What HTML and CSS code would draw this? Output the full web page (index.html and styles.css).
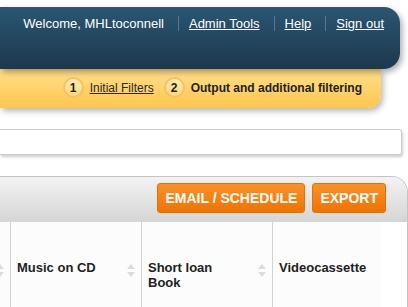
FILE: index.html
```html
<!DOCTYPE html>
<html lang="en">

<head>
    <meta charset="UTF-8">
    <meta name="viewport" content="width=device-width, initial-scale=1.0">
    <title>Report output</title>
    <link rel="stylesheet" href="styles.css">
</head>

<body>
    <header class="topbar">
        <ul class="usernav">
            <li>Welcome, MHLtoconnell</li>
            <li><a href="#">Admin Tools</a></li>
            <li><a href="#">Help</a></li>
            <li><a href="#">Sign out</a></li>
        </ul>
    </header>

    <nav class="steps">
        <span class="step-num">1</span>
        <a class="step-link" href="#">Initial Filters</a>
        <span class="step-num">2</span>
        <strong class="step-current">Output and additional filtering</strong>
    </nav>

    <div class="filterbox"></div>

    <section class="results">
        <div class="results-bar">
            <button class="btn" type="button">EMAIL / SCHEDULE</button>
            <button class="btn" type="button">EXPORT</button>
        </div>
        <div class="grid-scroll">
            <table class="grid">
                <thead>
                    <tr>
                        <!-- scrolled out of view, only its sort arrows show -->
                        <th>
                            <div class="th-inner">
                                <span class="th-text"></span>
                                <span class="sort"><i class="up"></i><i class="down"></i></span>
                            </div>
                        </th>
                        <th>
                            <div class="th-inner">
                                <span class="th-text">Music on CD</span>
                                <span class="sort"><i class="up"></i><i class="down"></i></span>
                            </div>
                        </th>
                        <th>
                            <div class="th-inner">
                                <span class="th-text">Short loan Book</span>
                                <span class="sort"><i class="up"></i><i class="down"></i></span>
                            </div>
                        </th>
                        <th>
                            <div class="th-inner">
                                <span class="th-text">Videocassette</span>
                                <span class="sort"><i class="up"></i><i class="down"></i></span>
                            </div>
                        </th>
                    </tr>
                </thead>
            </table>
        </div>
    </section>
</body>
</html>
```

FILE: styles.css
```css
body {
    margin: 0;
    padding: 7px 0 0 0;
    font-family: "Liberation Sans", Arial, sans-serif;
    background: #fff;
    overflow: hidden;
}

/* dark user bar */
.topbar {
    position: relative;
    z-index: 2;
    width: 400px;
    height: 62px;
    box-sizing: border-box;
    padding: 9px 16px 0 0;
    background: linear-gradient(#2a5673, #1d384d);
    border-radius: 0 16px 16px 0;
    box-shadow: 2px 3px 6px rgba(0, 0, 0, 0.35);
}

.usernav {
    list-style: none;
    margin: 0;
    padding: 0;
    display: flex;
    justify-content: flex-end;
    font-size: 13px;
    line-height: 15px;
    color: #fff;
}

.usernav li {
    padding-right: 14px;
}

.usernav li + li {
    padding-left: 10px;
    border-left: 1px solid #5e7788;
}

.usernav li:last-child {
    padding-right: 0;
}

.usernav a {
    color: #fff;
}

/* step breadcrumb */
.steps {
    position: relative;
    z-index: 1;
    width: 381px;
    height: 39px;
    box-sizing: border-box;
    padding: 0 19px 2px 0;
    display: flex;
    justify-content: flex-end;
    align-items: center;
    font-size: 12px;
    color: #2a2a2a;
    background: linear-gradient(#ffdf8c, #ffc64b);
    border-radius: 0 0 13px 0;
    box-shadow: 2px 3px 6px rgba(0, 0, 0, 0.3);
}

.step-num {
    width: 17px;
    height: 17px;
    display: flex;
    align-items: center;
    justify-content: center;
    border: 2px solid #f2c36a;
    border-radius: 50%;
    background: linear-gradient(#ffeab0, #ffd774);
    font-weight: bold;
    color: #222;
    margin-right: 6px;
}

.step-link {
    color: #2a2a2a;
    margin-right: 10px;
}

.step-current {
    color: #222;
}

/* empty filter panel */
.filterbox {
    width: 402px;
    height: 26px;
    box-sizing: border-box;
    margin-top: 21px;
    background: #fff;
    border: 1px solid #cdcdcd;
    border-left: none;
    border-radius: 0 3px 3px 0;
    box-shadow: 1px 2px 3px rgba(0, 0, 0, 0.2);
}

/* results panel */
.results {
    width: 408px;
    margin-top: 21px;
    box-sizing: border-box;
    border: 1px solid #c4c4c4;
    border-left: none;
    border-radius: 0 16px 0 0;
    background: #fff;
    overflow: hidden;
}

.results-bar {
    height: 45px;
    box-sizing: border-box;
    padding: 6px 21px 0 0;
    display: flex;
    justify-content: flex-end;
    gap: 7px;
    background: linear-gradient(#f3f3f3, #d5d5d5);
}

.btn {
    height: 30px;
    padding: 0 7px;
    font-family: inherit;
    font-size: 14px;
    font-weight: bold;
    color: #fff;
    background: linear-gradient(#fb9129, #ef7300);
    border: 1px solid #e67000;
    border-radius: 3px;
    cursor: pointer;
}

.grid-scroll {
    width: 381px;
    overflow: hidden;
}

.grid {
    table-layout: fixed;
    width: 524px;
    margin-left: -120px;
    border-collapse: separate;
    border-spacing: 0;
    background: #fcfcfc;
}

.grid th {
    width: 131px;
    height: 90px;
    box-sizing: border-box;
    padding: 38px 6px 0 6px;
    vertical-align: top;
    text-align: left;
    border-right: 1px solid #d2d2d2;
    font-size: 13px;
    line-height: 15px;
    color: #222;
}

.th-inner {
    display: flex;
    justify-content: space-between;
    align-items: flex-start;
}

.th-text {
    width: 92px;
}

.sort {
    display: flex;
    flex-direction: column;
    gap: 3px;
    margin-top: 4px;
}

.sort i {
    display: block;
    width: 0;
    height: 0;
    border-left: 4px solid transparent;
    border-right: 4px solid transparent;
}

.sort .up {
    border-bottom: 5px solid #dcdcdc;
}

.sort .down {
    border-top: 5px solid #dcdcdc;
}
```
